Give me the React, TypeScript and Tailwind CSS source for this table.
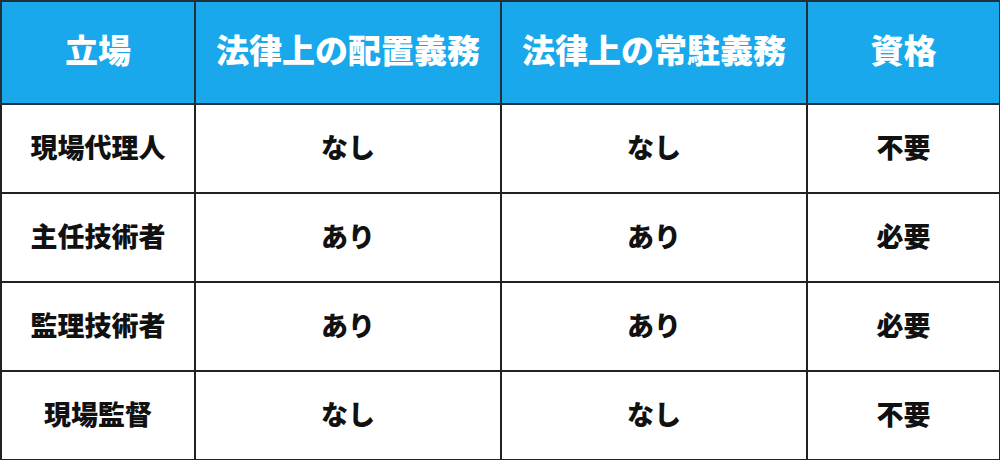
const HEADERS = ['立場', '法律上の配置義務', '法律上の常駐義務', '資格'];

const ROWS = [
  ['現場代理人', 'なし', 'なし', '不要'],
  ['主任技術者', 'あり', 'あり', '必要'],
  ['監理技術者', 'あり', 'あり', '必要'],
  ['現場監督', 'なし', 'なし', '不要'],
];

export default function App() {
  return (
    <div className="w-[1000px] h-[460px] bg-white font-['Noto_Sans_CJK_JP',sans-serif]">
      <table className="w-[999px] h-[459px] border-collapse table-fixed">
        <colgroup>
          <col className="w-[194px]" />
          <col className="w-[306px]" />
          <col className="w-[306px]" />
          <col className="w-[193px]" />
        </colgroup>
        <thead>
          <tr className="h-[103px] bg-[#19a8eb]">
            {HEADERS.map((h) => (
              <th key={h} className="border-2 border-[#23303a] pb-[6px] text-white text-[33px] leading-none font-black text-center">
                {h}
              </th>
            ))}
          </tr>
        </thead>
        <tbody>
          {ROWS.map((row) => (
            <tr key={row[0]} className="h-[89px]">
              {row.map((cell, i) => (
                <td key={i} className="border-2 border-[#222] pb-[4px] text-[#111] text-[27px] leading-none font-black text-center">
                  {cell}
                </td>
              ))}
            </tr>
          ))}
        </tbody>
      </table>
    </div>
  );
}
